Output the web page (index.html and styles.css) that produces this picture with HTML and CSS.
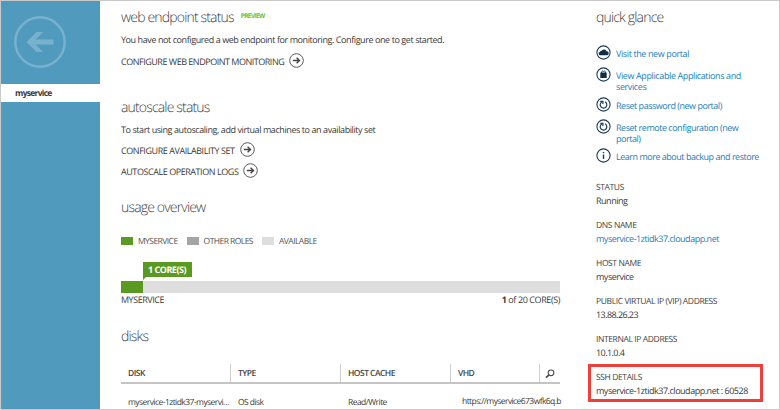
FILE: index.html
```html
<!DOCTYPE html>
<html lang="en">
<head>
<meta charset="utf-8">
<title>myservice</title>
<link rel="stylesheet" href="styles.css">
</head>
<body>
<svg width="0" height="0" class="defs">
  <symbol id="go" viewBox="0 0 15 15"><circle cx="7.5" cy="7.5" r="6.8" fill="none" stroke="#5a5a5a" stroke-width="1"/><path d="M3.900 7.500h6.600M7.600 4.700l2.900 2.800-2.900 2.800" fill="none" stroke="#444" stroke-width="1.400"/></symbol>
  <symbol id="reset" viewBox="0 0 15 15"><circle cx="7.500" cy="7.500" r="6.600" fill="none" stroke="#1d3c54" stroke-width="1.100"/><path d="M9 4.800a3.300 3.300 0 1 1-3.200.1M4.300 4.300h2.600v2.700" fill="none" stroke="#1d3c54" stroke-width="1.200"/></symbol>
</svg>
<div class="page">
  <nav class="rail">
    <svg class="back" viewBox="0 0 52 52"><circle cx="26" cy="26" r="24.700" fill="none" stroke="#77b1cd" stroke-width="2.500"/><path d="M12.500 26 22.500 16h6.700L21.500 23.500h18v5h-18L29.200 36h-6.700z" fill="#77b1cd"/></svg>
    <div class="rail-item">myservice</div>
  </nav>
  <main class="main">
    <section class="endpoint">
      <h2>web endpoint status<sup>PREVIEW</sup></h2>
      <p>You have not configured a web endpoint for monitoring. Configure one to get started.</p>
      <a class="action wide">CONFIGURE WEB ENDPOINT MONITORING<svg><use href="#go"/></svg></a>
    </section>
    <section class="autoscale">
      <h2>autoscale status</h2>
      <p>To start using autoscaling, add virtual machines to an availability set</p>
      <a class="action">CONFIGURE AVAILABILITY SET<svg><use href="#go"/></svg></a>
      <a class="action">AUTOSCALE OPERATION LOGS<svg><use href="#go"/></svg></a>
    </section>
    <section class="usage">
      <h2>usage overview</h2>
      <div class="legend">
        <span><i class="own"></i>MYSERVICE</span>
        <span><i class="other"></i>OTHER ROLES</span>
        <span><i class="free"></i>AVAILABLE</span>
      </div>
      <div class="meter">
        <div class="fill"></div>
        <div class="tip">1 CORE(S)</div>
      </div>
      <div class="meter-text"><span>MYSERVICE</span><span class="count"><b>1</b> of 20 CORE(S)</span></div>
    </section>
    <section class="disks">
      <h2>disks</h2>
      <div class="row head">
        <div>DISK</div><div>TYPE</div><div>HOST CACHE</div><div>VHD</div>
        <div class="search"><svg viewBox="0 0 10 10"><circle cx="6" cy="3.800" r="2.800" fill="none" stroke="#4a4a4a" stroke-width="1.100"/><path d="M4.100 5.800.9 8.600" stroke="#4a4a4a" stroke-width="1.700"/></svg></div>
      </div>
      <div class="row">
        <div>myservice-1ztidk37-myservi…</div><div>OS disk</div><div>Read/Write</div><div class="vhd">https://myservice673wfk6q.b</div>
      </div>
    </section>
  </main>
  <aside class="glance">
    <h2>quick glance</h2>
    <ul>
      <li><svg viewBox="0 0 15 15"><circle cx="7.500" cy="7.500" r="6.600" fill="none" stroke="#1d3c54" stroke-width="1.100"/><path d="M4 10.300a1.700 1.700 0 0 1-.1-3.300A2.100 2.100 0 0 1 6 5.400a2.500 2.500 0 0 1 4.400.9 2 2 0 0 1 .7 4z" fill="#0f2f48"/></svg><a>Visit the new portal</a></li>
      <li><svg viewBox="0 0 15 15"><circle cx="7.500" cy="7.500" r="6.600" fill="none" stroke="#1d3c54" stroke-width="1.100"/><path d="M4.300 5.600h6.400V11H4.300z" fill="#0f2f48"/><path d="M5.700 6V4.600q.7-1.200 1.800 0 1.100-1.200 1.800 0V6" fill="none" stroke="#0f2f48"/></svg><a>View Applicable Applications and<br>services</a></li>
      <li><svg><use href="#reset"/></svg><a class="snug">Reset password (new portal)</a></li>
      <li><svg><use href="#reset"/></svg><a class="snug">Reset remote configuration (new<br>portal)</a></li>
      <li><svg viewBox="0 0 15 15"><circle cx="7.500" cy="7.500" r="6.600" fill="none" stroke="#1d3c54" stroke-width="1.100"/><path d="M7.500 6.400V11M7.500 3.900v1.400" stroke="#1d3c54" stroke-width="1.400"/></svg><a class="snug">Learn more about backup and restore</a></li>
    </ul>
    <dl>
      <div><dt>STATUS</dt><dd>Running</dd></div>
      <div><dt>DNS NAME</dt><dd><a>myservice-1ztidk37.cloudapp.net</a></dd></div>
      <div><dt>HOST NAME</dt><dd>myservice</dd></div>
      <div><dt>PUBLIC VIRTUAL IP (VIP) ADDRESS</dt><dd class="ip">13.88.26.23</dd></div>
      <div><dt>INTERNAL IP ADDRESS</dt><dd class="ip">10.1.0.4</dd></div>
      <div class="marked"><dt>SSH DETAILS</dt><dd>myservice-1ztidk37.cloudapp.net : 60528</dd></div>
    </dl>
  </aside>
</div>
</body>
</html>
```
FILE: styles.css
```css
* { box-sizing: border-box; margin: 0; padding: 0; }
body { background: #fff; font-family: "Open Sans", "Noto Sans", sans-serif; color: #3a3a3a; text-rendering: geometricPrecision; }
.defs { position: absolute; }
.page { display: flex; width: 780px; height: 410px; border: 1px solid #c9c9c9; overflow: hidden; }
svg { display: block; flex: none; }

.rail { width: 99px; background: #509abd; padding-top: 15px; }
.back { width: 52px; height: 52px; margin-left: 13px; }
.rail-item { height: 18px; margin-top: 16px; padding-left: 14px; background: #fff; font-size: 8.5px; font-weight: 700; line-height: 19px; letter-spacing: -0.72px; }

.main { width: 439px; margin-left: 21px; white-space: nowrap; }
h2 { height: 20px; font-size: 14px; font-weight: 300; line-height: 23px; letter-spacing: -0.83px; color: #404040; }
sup { margin-left: 7px; font-size: 6.5px; font-weight: 700; line-height: 1; letter-spacing: -0.6px; color: #6cc31c; vertical-align: 4px; }
p { height: 14px; font-size: 9px; line-height: 14px; letter-spacing: -0.42px; }
.action { display: flex; align-items: center; height: 15px; font-size: 9px; line-height: 15px; letter-spacing: -0.44px; }
.action.wide { letter-spacing: -0.48px; }
.action svg { width: 15px; height: 15px; margin: -2px 0 0 5px; }

.endpoint { padding-top: 5px; height: 90px; }
.endpoint p { margin: 7px 0; }
.autoscale { padding-top: 5px; height: 100px; }
.autoscale p { margin: 7px 0 6px; }
.autoscale .action + .action { margin-top: 6px; }
.usage { padding-top: 5px; height: 129px; }
.legend { display: flex; gap: 9px; height: 12px; margin-top: 19px; font-size: 8.5px; line-height: 13px; letter-spacing: -0.55px; color: #555; }
.legend span { display: flex; align-items: center; }
.legend i { width: 12px; height: 8px; margin-right: 5px; }
.own, .fill { background: #5b9a20; }
.other { background: #a5a5a5; }
.free { background: #dedede; }
.meter { position: relative; height: 12px; margin-top: 34px; background: #dedede; }
.fill { width: 5%; height: 12px; }
.tip { position: absolute; left: 22px; top: -19px; width: 49px; height: 15px; padding-left: 5px; background: #5b9a20; color: #fff; font-size: 9px; font-weight: 700; line-height: 15px; letter-spacing: -0.49px; }
.tip::after { content: ""; position: absolute; left: 0; top: 15px; border-top: 3px solid #5b9a20; border-right: 3px solid transparent; }
.meter-text { display: flex; justify-content: space-between; height: 14px; font-size: 9px; line-height: 14px; letter-spacing: -0.47px; }
.count { letter-spacing: -0.4px; }

.disks { padding-top: 5px; }
.row { display: grid; grid-template-columns: 110px 110px 110px 89px 20px; height: 26px; padding-top: 7px; font-size: 8.5px; letter-spacing: -0.55px; }
.row > div { height: 24px; padding-left: 7px; line-height: 24px; }
.row.head { height: 20px; margin-top: 19px; padding: 0; border-bottom: 2px solid #c4c4c4; font-weight: 600; letter-spacing: -0.54px; color: #444; }
.row.head > div { height: 18px; border-right: 1px solid #cfcfcf; line-height: 20px; }
.row.head .search { border: 0; padding: 5px 0 0 5px; }
.search svg { width: 10px; height: 10px; }
.row .vhd { padding-left: 11px; margin-top: -1px; letter-spacing: -0.58px; }

.glance { margin-left: 36px; padding-top: 5px; width: 183px; white-space: nowrap; }
a { color: inherit; }
.glance a { color: #1a80bd; }
ul { list-style: none; margin-top: 19px; display: grid; grid-template-rows: 22px 29.5px 22px 29.5px 15px; }
li { display: flex; gap: 5.5px; font-size: 9px; line-height: 11px; letter-spacing: -0.39px; }
li svg { width: 15px; height: 15px; margin-left: -0.5px; }
li a { padding-top: 3px; }
.snug { letter-spacing: -0.48px; }
dl { display: grid; grid-auto-rows: 38px; margin-top: 18px; }
dt { height: 13px; font-size: 8.5px; line-height: 13px; letter-spacing: -0.39px; color: #444; }
dd { height: 13px; font-size: 9px; line-height: 13px; letter-spacing: -0.48px; }
.ip { letter-spacing: -0.57px; }
.marked { width: 175px; height: 38px; margin: -7px 0 0 -8px; padding: 4px 0 0 5px; border: 3px solid #ee403a; }
```
